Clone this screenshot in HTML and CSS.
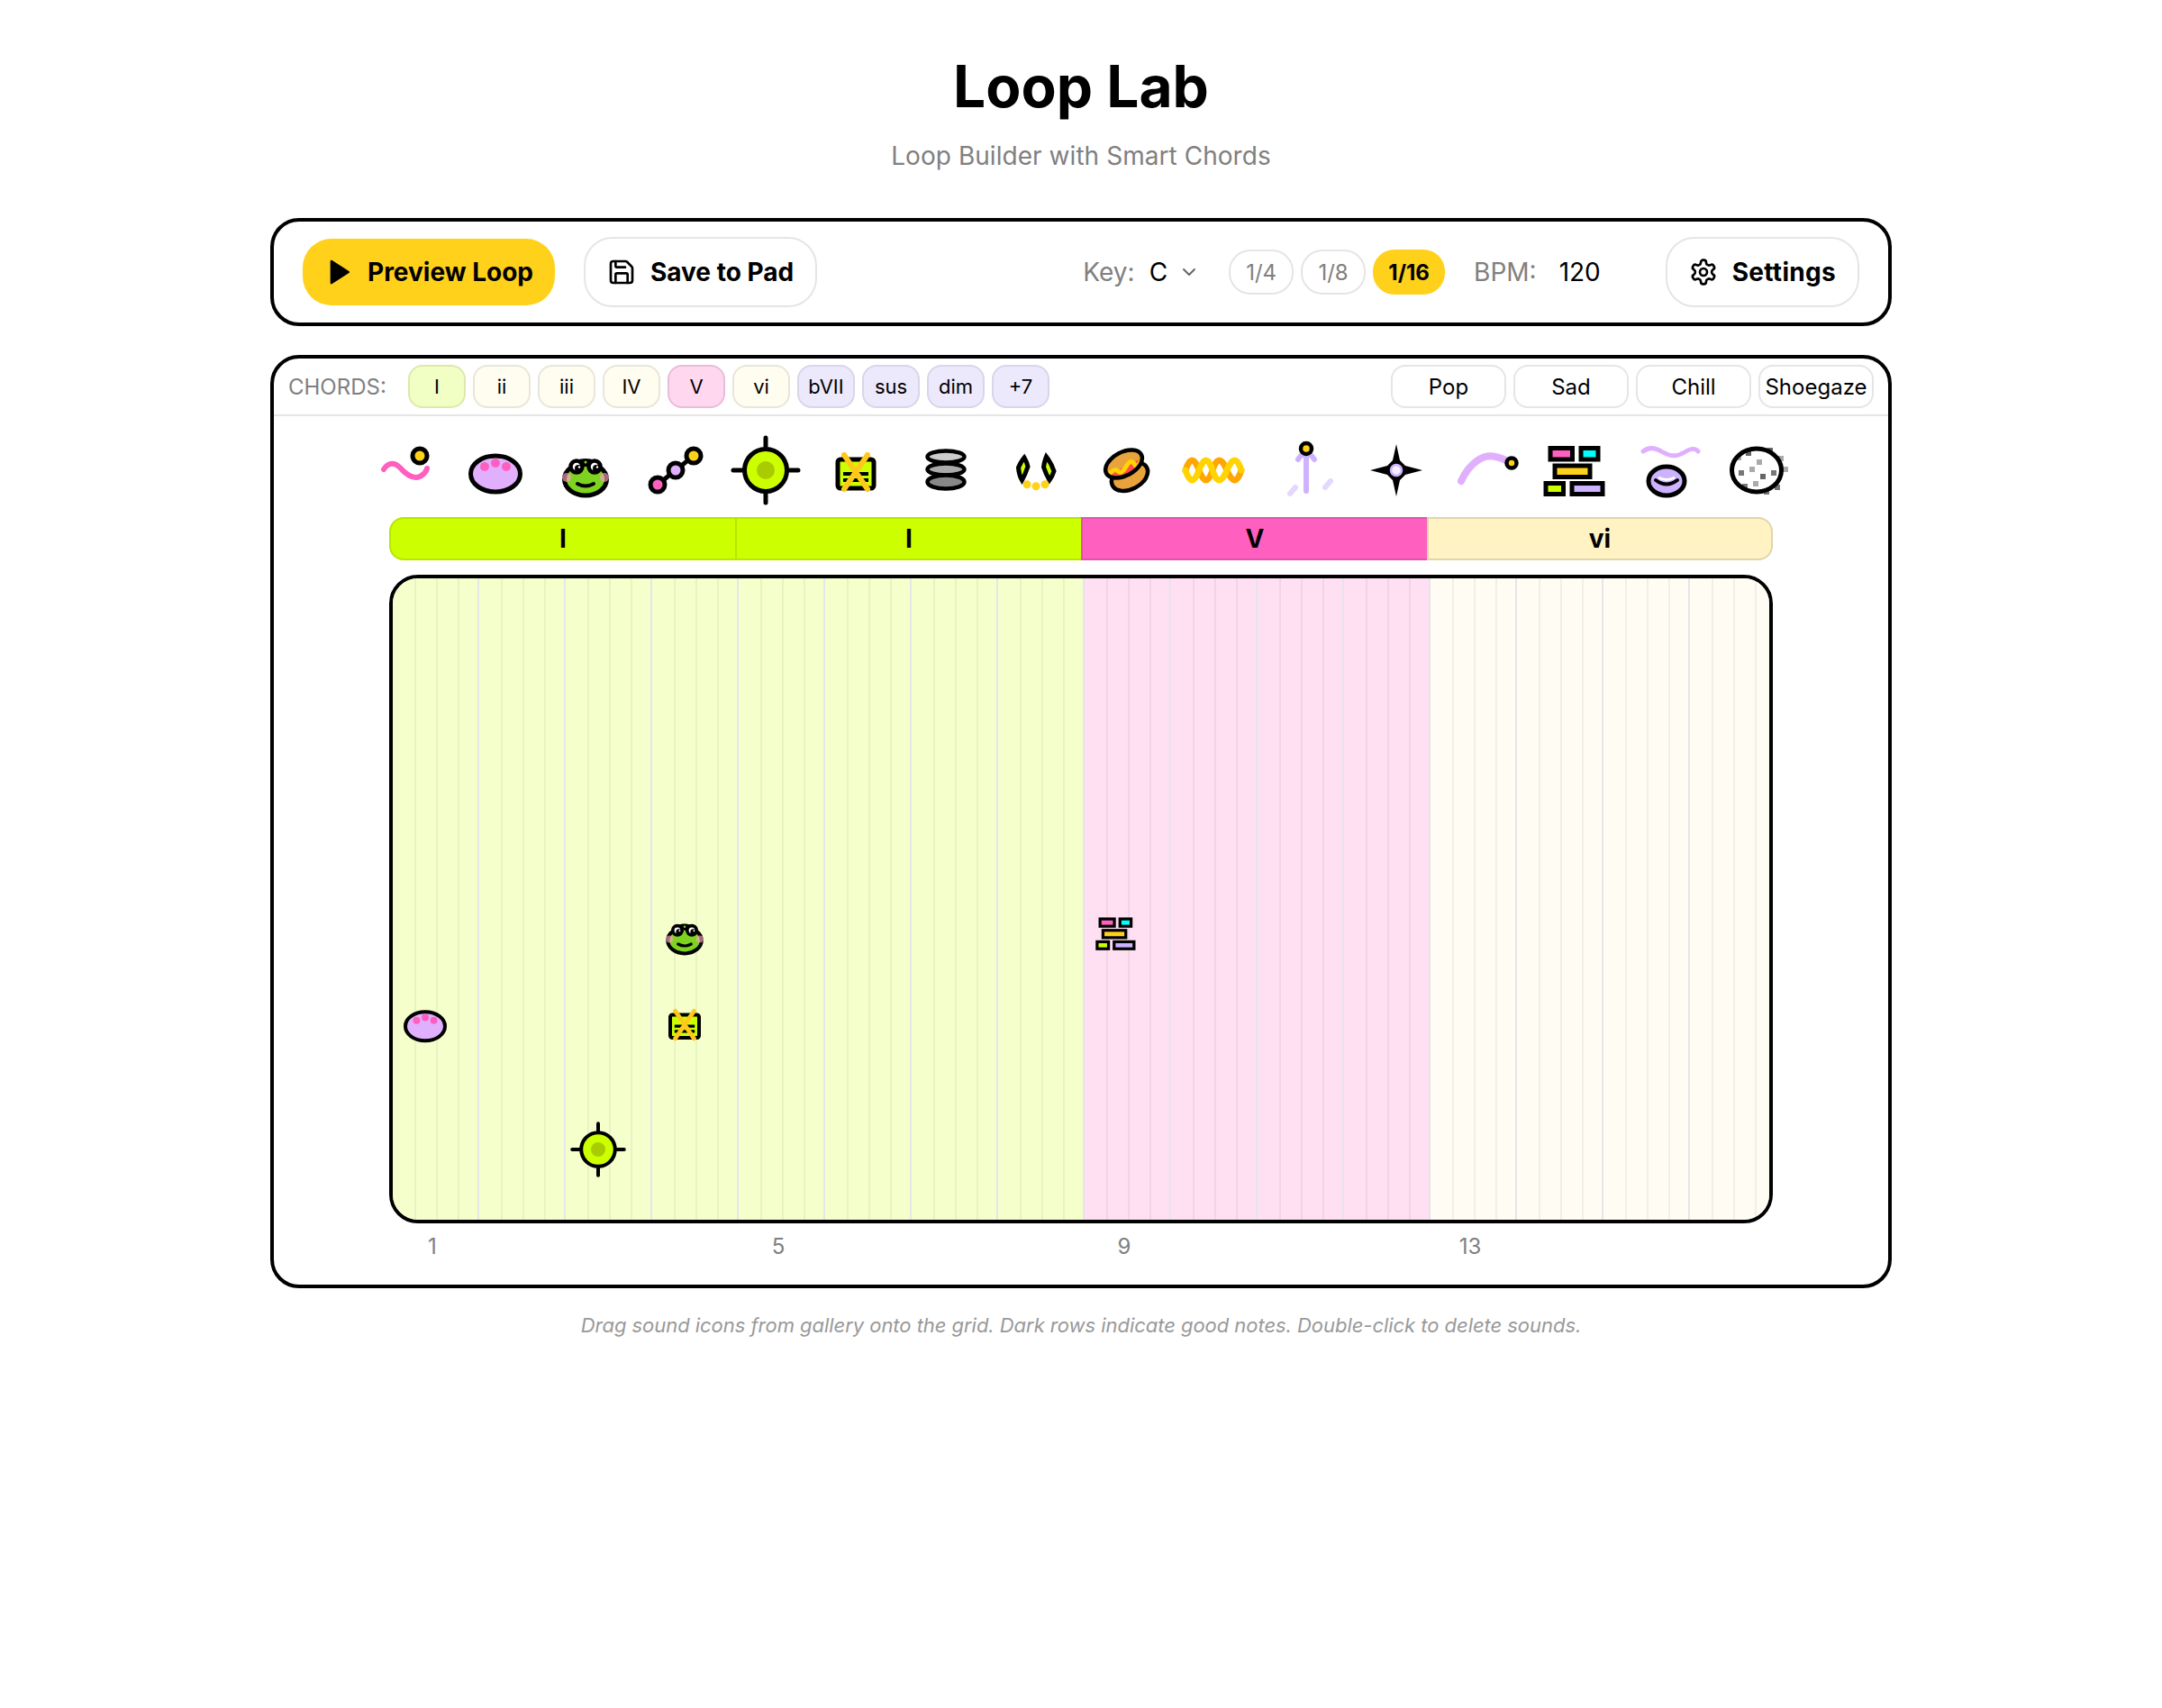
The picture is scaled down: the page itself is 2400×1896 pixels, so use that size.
FILE: index.html
```html
<!DOCTYPE html>
<html lang="en">
  <head>
    <meta charset="UTF-8" />
    <meta name="viewport" content="width=device-width, initial-scale=1.0" />
    <title>Loop Lab</title>
    <link rel="stylesheet" href="styles.css">
  </head>
  <body>
    <!-- sound icons, used by the gallery and the grid -->
    <svg class="sprites" aria-hidden="true">
      <clipPath id="bun-clip">
        <ellipse cx="37.500" cy="33" rx="22" ry="13" transform="rotate(-28 37.500 33)"/>
      </clipPath>
      <symbol id="s-wave" viewBox="0 0 80 80">
        <path d="M16 39C21 31 28 31 34 37C41 45 49 50 56 47C60 45 63 42 64 38" fill="none" stroke="#ff5fbf" stroke-width="6" stroke-linecap="round"/>
        <circle cx="56" cy="24" r="8" fill="#ffd11a" stroke="#000" stroke-width="5"/>
      </symbol>
      <symbol id="s-blob" viewBox="0 0 80 80">
        <ellipse cx="40" cy="44" rx="27.5" ry="20" fill="#e0b0ff" stroke="#000" stroke-width="5"/>
        <circle cx="28" cy="36" r="5" fill="#ff5fbf"/>
        <circle cx="40" cy="32" r="5" fill="#ff5fbf"/>
        <circle cx="52" cy="36" r="5" fill="#ff5fbf"/>
      </symbol>
      <symbol id="s-frog" viewBox="0 0 80 80">
        <ellipse cx="40" cy="50" rx="23.5" ry="18" fill="#7ed321" stroke="#000" stroke-width="5"/>
        <path d="M24 36C26 24 54 24 56 36Z" fill="#000"/>
        <circle cx="40" cy="31" r="1.500" fill="#7ed321"/>
        <circle cx="30" cy="36" r="6.500" fill="#fff" stroke="#000" stroke-width="4.500"/>
        <circle cx="50" cy="36" r="6.500" fill="#fff" stroke="#000" stroke-width="4.500"/>
        <circle cx="32" cy="38" r="4" fill="#000"/>
        <circle cx="52" cy="38" r="4" fill="#000"/>
        <circle cx="33" cy="36.500" r="1.200" fill="#fff"/>
        <circle cx="53" cy="36.500" r="1.200" fill="#fff"/>
        <circle cx="19" cy="48" r="5" fill="#ff9fc0" fill-opacity="0.65"/>
        <circle cx="61" cy="48" r="5" fill="#ff9fc0" fill-opacity="0.65"/>
        <path d="M31 55Q40 60 49 55" fill="none" stroke="#000" stroke-width="4" stroke-linecap="round"/>
      </symbol>
      <symbol id="s-nodes" viewBox="0 0 80 80">
        <path d="M20 56L60 24" stroke="#000" stroke-width="5"/>
        <circle cx="20" cy="56" r="8" fill="#ff5fbf" stroke="#000" stroke-width="5"/>
        <circle cx="40" cy="40" r="8" fill="#e0b0ff" stroke="#000" stroke-width="5"/>
        <circle cx="60" cy="24" r="8" fill="#ffd11a" stroke="#000" stroke-width="5"/>
      </symbol>
      <symbol id="s-target" viewBox="0 0 80 80">
        <circle cx="40" cy="40" r="23.5" fill="#ccff00" stroke="#000" stroke-width="5"/>
        <circle cx="40" cy="40" r="10" fill="#a8cc00"/>
        <path d="M40 4V14M40 66V76M4 40H14M66 40H76" stroke="#000" stroke-width="5" stroke-linecap="round"/>
      </symbol>
      <symbol id="s-shred" viewBox="0 0 80 80">
        <rect x="20" y="28" width="40" height="32" rx="3" fill="#ccff00" stroke="#000" stroke-width="5"/>
        <path d="M26 44H54M26 51H54" stroke="#000" stroke-width="4"/>
        <path d="M27 23L53 61M53 23L27 61" stroke="#ffc91a" stroke-width="6" stroke-linecap="round"/>
      </symbol>
      <symbol id="s-stack" viewBox="0 0 80 80">
        <ellipse cx="40" cy="25" rx="20.500" ry="6.500" fill="#ccc" stroke="#000" stroke-width="4.500"/>
        <ellipse cx="40" cy="39" rx="20.500" ry="6.500" fill="#aaa" stroke="#000" stroke-width="4.500"/>
        <ellipse cx="40" cy="53" rx="20.500" ry="7.500" fill="#888" stroke="#000" stroke-width="4.500"/>
      </symbol>
      <symbol id="s-leaves" viewBox="0 0 80 80">
        <path d="M27 26Q30 31 31 36Q28 45 24.500 51Q21 45 20.500 37Q23 31 27 26ZM51.500 25Q57 32 60 41Q58 47 55 51Q51 44 48.500 36.500Q49 31 51.500 25Z" fill="#ccff00" stroke="#000" stroke-width="5" stroke-miterlimit="10"/>
        <circle cx="30" cy="55.700" r="4.500" fill="#ffd11a"/>
        <circle cx="40" cy="57.700" r="4.500" fill="#ffd11a"/>
        <circle cx="50" cy="55.700" r="4.500" fill="#ffd11a"/>
      </symbol>
      <symbol id="s-burger" viewBox="0 0 80 80">
        <ellipse cx="44" cy="47" rx="21.500" ry="14" transform="rotate(-28 44 47)" fill="#e8a33d" stroke="#000" stroke-width="4.500"/>
        <ellipse cx="37.500" cy="33" rx="22" ry="13" transform="rotate(-28 37.500 33)" fill="#e8a33d"/>
        <g clip-path="url(#bun-clip)">
          <path d="M18 46L57 27L64 40L30 60Z" fill="#ff4d4d"/>
          <path d="M21 45Q27 37 31 41T40 36T49 33T58 27" fill="none" stroke="#ffd400" stroke-width="5"/>
        </g>
        <ellipse cx="37.500" cy="33" rx="22" ry="13" transform="rotate(-28 37.500 33)" fill="none" stroke="#000" stroke-width="4.500"/>
      </symbol>
      <symbol id="s-spring" viewBox="0 0 80 80">
        <path d="M6 40Q13 18 21 40T36 40T52 40T68 40" fill="none" stroke="#ffa600" stroke-width="7" stroke-linecap="round"/>
        <path d="M6 40Q13 62 21 40T36 40T52 40T68 40" fill="none" stroke="#ffd400" stroke-width="7" stroke-linecap="round"/>
      </symbol>
      <symbol id="s-pin" viewBox="0 0 80 80">
        <path d="M40 22V63M31 28Q40 14 49 28" fill="none" stroke="#cdb3ff" stroke-width="6" stroke-linecap="round"/>
        <path d="M22 66L28 59M61 59L67 52" stroke="#e4d8ff" stroke-width="6" stroke-linecap="round"/>
        <circle cx="40" cy="16" r="6" fill="#ffd11a" stroke="#000" stroke-width="4.500"/>
      </symbol>
      <symbol id="s-star" viewBox="0 0 80 80">
        <path d="M40 11L44 29L50 35L69 40L50 45L44 51L40 69L36 51L30 45L11 40L30 35L36 29Z" fill="#000"/>
        <circle cx="40" cy="40" r="6" fill="#f4eeff" stroke="#cdb3ff" stroke-width="2.500"/>
      </symbol>
      <symbol id="s-arc" viewBox="0 0 80 80">
        <path d="M12 52C22 30 38 22 50 25C56 26 62 29 68 32" fill="none" stroke="#e0b0ff" stroke-width="8" stroke-linecap="round"/>
        <circle cx="68" cy="32" r="5.500" fill="#ffd11a" stroke="#000" stroke-width="4.500"/>
      </symbol>
      <symbol id="s-bricks" viewBox="0 0 80 80">
        <g stroke="#000" stroke-width="5">
          <rect x="11" y="15.500" width="24.500" height="12.500" fill="#ff5fbf"/>
          <rect x="45" y="15.500" width="19" height="12.500" fill="#00ffff"/>
          <rect x="16" y="35" width="39" height="12.500" fill="#ffd11a"/>
          <rect x="6" y="54.500" width="19.500" height="12" fill="#ccff00"/>
          <rect x="35" y="54.500" width="34" height="12" fill="#cdb3ff"/>
        </g>
      </symbol>
      <symbol id="s-lips" viewBox="0 0 80 80">
        <path d="M14 19C20 14 28 15 36 20C44 25 52 25 60 20C66 16 72 15 75 19" fill="none" stroke="#e0b0ff" stroke-width="5" stroke-linecap="round"/>
        <ellipse cx="40" cy="52" rx="20" ry="16" fill="#cdb3ff" stroke="#000" stroke-width="5"/>
        <path d="M31 48Q40 53 49 48" fill="none" stroke="#fff" stroke-width="3"/>
        <path d="M28 51Q40 60 52 51" fill="none" stroke="#000" stroke-width="4" stroke-linecap="round"/>
      </symbol>
      <symbol id="s-egg" viewBox="0 0 80 80">
        <ellipse cx="40" cy="40" rx="27.500" ry="24" fill="#fff"/>
        <g fill="#666">
          <rect x="28" y="18" width="6" height="6"/>
          <rect x="52" y="15" width="6" height="6"/>
          <rect x="20" y="40" width="6" height="6" fill="#777"/>
          <rect x="44" y="44" width="6" height="6"/>
          <rect x="56" y="40" width="6" height="6" fill="#777"/>
          <rect x="24" y="55" width="6" height="6" fill="#777"/>
          <rect x="48" y="61" width="6" height="6" fill="#777"/>
          <rect x="60" y="56" width="6" height="6" fill="#777"/>
        </g>
        <g fill="#aaa">
          <rect x="64" y="24" width="6" height="6"/>
          <rect x="17" y="23" width="6" height="6"/>
          <rect x="40" y="28" width="6" height="6"/>
          <rect x="32" y="36" width="6" height="6"/>
          <rect x="69" y="36" width="6" height="6"/>
          <rect x="36" y="52" width="6" height="6"/>
        </g>
        <ellipse cx="40" cy="40" rx="27.500" ry="24" fill="none" stroke="#000" stroke-width="5"/>
      </symbol>
    </svg>

    <div class="page">
      <header class="head">
        <h1>Loop Lab</h1>
        <p class="subtitle">Loop Builder with Smart Chords</p>
      </header>

      <section class="toolbar">
        <button class="btn btn-primary">
          <svg class="btn-icon" viewBox="0 0 24 24" fill="currentColor" stroke="currentColor" stroke-width="2" stroke-linecap="round" stroke-linejoin="round"><polygon points="6 3 20 12 6 21 6 3"/></svg>
          Preview Loop
        </button>
        <button class="btn">
          <svg class="btn-icon" viewBox="0 0 24 24" fill="none" stroke="currentColor" stroke-width="2" stroke-linecap="round" stroke-linejoin="round"><path d="M15.2 3a2 2 0 0 1 1.4.6l3.8 3.8a2 2 0 0 1 .6 1.4V19a2 2 0 0 1-2 2H5a2 2 0 0 1-2-2V5a2 2 0 0 1 2-2z"/><path d="M17 21v-7a1 1 0 0 0-1-1H8a1 1 0 0 0-1 1v7"/><path d="M7 3v4a1 1 0 0 0 1 1h7"/></svg>
          Save to Pad
        </button>

        <div class="controls">
          <div class="key">
            <span class="field-label">Key:</span>
            <span class="field-value">C</span>
            <svg class="chevron" viewBox="0 0 24 24" fill="none" stroke="currentColor" stroke-width="2" stroke-linecap="round" stroke-linejoin="round"><path d="m6 9 6 6 6-6"/></svg>
          </div>
          <div class="steps">
            <button class="step">1/4</button>
            <button class="step">1/8</button>
            <button class="step step-active">1/16</button>
          </div>
          <div class="bpm">
            <span class="field-label">BPM:</span>
            <span class="field-value bpm-value">120</span>
          </div>
        </div>

        <button class="btn btn-settings">
          <svg class="btn-icon" viewBox="0 0 24 24" fill="none" stroke="currentColor" stroke-width="2" stroke-linecap="round" stroke-linejoin="round"><path d="M12.22 2h-.44a2 2 0 0 0-2 2v.18a2 2 0 0 1-1 1.73l-.43.25a2 2 0 0 1-2 0l-.15-.08a2 2 0 0 0-2.73.73l-.22.38a2 2 0 0 0 .73 2.73l.15.1a2 2 0 0 1 1 1.72v.51a2 2 0 0 1-1 1.74l-.15.09a2 2 0 0 0-.73 2.73l.22.38a2 2 0 0 0 2.73.73l.15-.08a2 2 0 0 1 2 0l.43.25a2 2 0 0 1 1 1.73V20a2 2 0 0 0 2 2h.44a2 2 0 0 0 2-2v-.18a2 2 0 0 1 1-1.73l.43-.25a2 2 0 0 1 2 0l.15.08a2 2 0 0 0 2.73-.73l.22-.39a2 2 0 0 0-.73-2.73l-.15-.08a2 2 0 0 1-1-1.74v-.5a2 2 0 0 1 1-1.74l.15-.09a2 2 0 0 0 .73-2.73l-.22-.38a2 2 0 0 0-2.73-.73l-.15.08a2 2 0 0 1-2 0l-.43-.25a2 2 0 0 1-1-1.73V4a2 2 0 0 0-2-2z"/><circle cx="12" cy="12" r="3"/></svg>
          Settings
        </button>
      </section>

      <section class="panel">
        <div class="chord-row">
          <span class="chord-label">CHORDS:</span>
          <button class="chip chip-tonic">I</button>
          <button class="chip chip-plain">ii</button>
          <button class="chip chip-plain">iii</button>
          <button class="chip chip-plain">IV</button>
          <button class="chip chip-dom">V</button>
          <button class="chip chip-plain">vi</button>
          <button class="chip chip-color">bVII</button>
          <button class="chip chip-color">sus</button>
          <button class="chip chip-color">dim</button>
          <button class="chip chip-color">+7</button>
          <div class="presets">
            <button class="preset">Pop</button>
            <button class="preset">Sad</button>
            <button class="preset">Chill</button>
            <button class="preset">Shoegaze</button>
          </div>
        </div>

        <div class="gallery">
          <svg class="sound"><use href="#s-wave"/></svg>
          <svg class="sound"><use href="#s-blob"/></svg>
          <svg class="sound"><use href="#s-frog"/></svg>
          <svg class="sound"><use href="#s-nodes"/></svg>
          <svg class="sound"><use href="#s-target"/></svg>
          <svg class="sound"><use href="#s-shred"/></svg>
          <svg class="sound"><use href="#s-stack"/></svg>
          <svg class="sound"><use href="#s-leaves"/></svg>
          <svg class="sound"><use href="#s-burger"/></svg>
          <svg class="sound"><use href="#s-spring"/></svg>
          <svg class="sound"><use href="#s-pin"/></svg>
          <svg class="sound"><use href="#s-star"/></svg>
          <svg class="sound"><use href="#s-arc"/></svg>
          <svg class="sound"><use href="#s-bricks"/></svg>
          <svg class="sound"><use href="#s-lips"/></svg>
          <svg class="sound"><use href="#s-egg"/></svg>
        </div>

        <div class="track">
          <div class="bars">
            <div class="bar bar-tonic">I</div>
            <div class="bar bar-tonic">I</div>
            <div class="bar bar-dom">V</div>
            <div class="bar bar-six">vi</div>
          </div>

          <div class="grid">
            <div class="zone zone-tonic"></div>
            <div class="zone zone-tonic"></div>
            <div class="zone zone-dom"></div>
            <div class="zone zone-six"></div>
            <svg class="note" style="left: 4px; top: 462px"><use href="#s-blob"/></svg>
            <svg class="note" style="left: 196px; top: 602px"><use href="#s-target"/></svg>
            <svg class="note" style="left: 292px; top: 362px"><use href="#s-frog"/></svg>
            <svg class="note" style="left: 292px; top: 462px"><use href="#s-shred"/></svg>
            <svg class="note note-small" style="left: 778px; top: 368px"><use href="#s-bricks"/></svg>
          </div>

          <div class="beats">
            <span class="beat">1</span>
            <span class="beat">5</span>
            <span class="beat">9</span>
            <span class="beat">13</span>
          </div>
        </div>
      </section>

      <p class="hint">Drag sound icons from gallery onto the grid. Dark rows indicate good notes. Double-click to delete sounds.</p>
    </div>
  </body>
</html>
```

FILE: styles.css
```css
* {
  margin: 0;
  padding: 0;
  box-sizing: border-box;
}
body {
  font-family: Inter, "Liberation Sans", sans-serif;
  background-color: #fff;
  color: #000;
}
button {
  font-family: inherit;
  color: inherit;
  background: none;
  border: none;
}

.sprites {
  position: absolute;
  width: 0;
  height: 0;
}

.page {
  width: 1800px;
  margin: 0 auto;
}

.head {
  text-align: center;
  padding-top: 56px;
  height: 242px;
}
h1 {
  font-size: 64px;
  font-weight: 700;
  line-height: 80px;
}
.subtitle {
  margin-top: 16px;
  font-size: 28px;
  line-height: 42px;
  letter-spacing: 0.05px;
  color: #808080;
}

.toolbar {
  display: flex;
  align-items: center;
  gap: 32px;
  height: 120px;
  padding: 0 32px;
  border: 4px solid #000;
  border-radius: 32px;
}
.btn {
  display: flex;
  align-items: center;
  gap: 16px;
  height: 78px;
  padding: 0 24px;
  border: 2px solid #e5e5e5;
  border-radius: 32px;
  font-size: 28px;
  font-weight: 700;
}
.btn-primary {
  height: 74px;
  background-color: #ffd11a;
  border: none;
}
.btn-settings {
  letter-spacing: 0.3px;
}
.btn-icon {
  width: 32px;
  height: 32px;
}

.controls {
  display: flex;
  align-items: center;
  gap: 32px;
  margin-left: auto;
}
.key,
.bpm {
  display: flex;
  align-items: center;
  font-size: 28px;
}
.field-label {
  color: #808080;
}
.field-value {
  margin-left: 16px;
}
.bpm-value {
  width: 86px;
  margin-left: 25px;
}
.chevron {
  width: 24px;
  height: 24px;
  margin-left: 12px;
  color: #666;
}
.steps {
  display: flex;
  gap: 8px;
}
.step {
  width: 72px;
  height: 50px;
  border: 2px solid #e5e5e5;
  border-radius: 24px;
  font-size: 24px;
  color: #808080;
}
.step-active {
  width: 80px;
  border: none;
  background-color: #ffd11a;
  color: #000;
  font-weight: 700;
}

.panel {
  height: 1036px;
  margin-top: 32px;
  border: 4px solid #000;
  border-radius: 32px;
}

.chord-row {
  display: flex;
  align-items: center;
  gap: 8px;
  height: 64px;
  padding: 0 16px;
  border-bottom: 2px solid #e5e5e5;
}
.chord-label {
  width: 125px;
  font-size: 24px;
  color: #808080;
}
.chip {
  width: 64px;
  height: 48px;
  border: 2px solid;
  border-radius: 16px;
  font-size: 22px;
}
.chip-tonic {
  background-color: #f2ffc4;
  border-color: #dde8ac;
}
.chip-plain {
  background-color: #fffdf0;
  border-color: #e8e6da;
}
.chip-dom {
  background-color: #ffd8f0;
  border-color: #e8bcd8;
}
.chip-color {
  background-color: #ede9fc;
  border-color: #d9d5ea;
}
.presets {
  display: flex;
  gap: 8px;
  margin-left: auto;
}
.preset {
  width: 128px;
  height: 48px;
  border: 2px solid #e5e5e5;
  border-radius: 16px;
  font-size: 24px;
}

.gallery {
  display: flex;
  justify-content: center;
  gap: 20px;
  padding: 20px 0 12px;
}
.sound {
  width: 80px;
  height: 80px;
}

.track {
  width: 1536px;
  margin: 0 auto;
}
.bars {
  display: flex;
  height: 48px;
}
.bar {
  flex: none;
  width: 384px;
  display: flex;
  align-items: center;
  justify-content: center;
  border-style: solid;
  border-width: 2px 0 2px 2px;
  font-size: 28px;
  font-weight: 700;
}
.bar:first-child {
  border-radius: 16px 0 0 16px;
}
.bar:last-child {
  border-right-width: 2px;
  border-radius: 0 16px 16px 0;
}
.bar-tonic {
  background-color: #ccff00;
  border-color: #b8e600;
}
.bar-dom {
  background-color: #ff5fbf;
  border-color: #e055ac;
}
.bar-six {
  background-color: #fff3c4;
  border-color: #e0d5ac;
}

.grid {
  position: relative;
  display: flex;
  height: 720px;
  margin-top: 16px;
  border: 4px solid #000;
  border-radius: 32px;
  overflow: hidden;
}
.zone {
  flex: none;
  width: 384px;
  background-image: linear-gradient(
    90deg,
    transparent 24px,
    rgba(0, 0, 0, 0.05) 24px,
    rgba(0, 0, 0, 0.05) 26px,
    transparent 26px,
    transparent 48px,
    rgba(0, 0, 0, 0.05) 48px,
    rgba(0, 0, 0, 0.05) 50px,
    transparent 50px,
    transparent 72px,
    rgba(0, 0, 0, 0.05) 72px,
    rgba(0, 0, 0, 0.05) 74px,
    transparent 74px,
    transparent 94px,
    #e5e5ea 94px
  );
  background-size: 96px 100%;
}
.zone-tonic {
  background-color: #f5ffcc;
}
.zone-dom {
  background-color: #ffdff2;
}
.zone-six {
  background-color: #fffcf3;
}
.note {
  position: absolute;
  width: 64px;
  height: 64px;
}
.note-small {
  width: 52px;
  height: 52px;
}

.beats {
  display: flex;
  margin-top: 9px;
}
.beat {
  flex: 1;
  padding-right: 288px;
  text-align: center;
  font-size: 24px;
  line-height: 34px;
  color: #808080;
}

.hint {
  margin-top: 24px;
  text-align: center;
  font-size: 22px;
  font-style: italic;
  line-height: 34px;
  letter-spacing: -0.04px;
  color: #999;
}
```
